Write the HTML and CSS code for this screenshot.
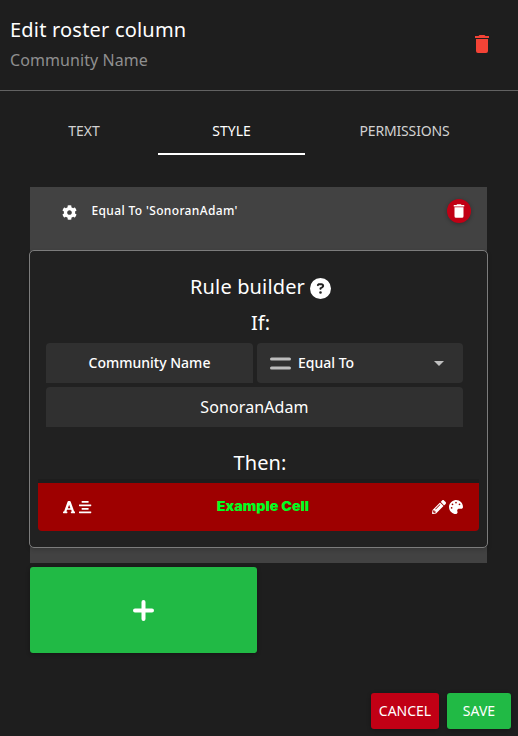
FILE: index.html
```html
<!DOCTYPE html>
<html lang="en">
<head>
<meta charset="utf-8">
<title>Edit roster column</title>
<link rel="stylesheet" href="styles.css">
</head>
<body>
<main class="dialog">
  <header class="header">
    <div>
      <h1 class="title">Edit roster column</h1>
      <p class="subtitle">Community Name</p>
    </div>
    <svg class="header-trash" viewBox="0 0 24 24"><path d="M19,4H15.5L14.5,3H9.5L8.5,4H5V6H19M6,19A2,2 0 0,0 8,21H16A2,2 0 0,0 18,19V7H6V19Z"/></svg>
  </header>
  <nav class="tabs">
    <div class="tab">TEXT</div>
    <div class="tab active">STYLE</div>
    <div class="tab">PERMISSIONS</div>
  </nav>
  <section class="rule">
    <div class="rule-head">
      <svg class="gear" viewBox="0 0 512 512"><path d="M487.4 315.7l-42.6-24.6c4.3-23.2 4.3-47 0-70.2l42.6-24.6c4.9-2.8 7.1-8.6 5.5-14-11.1-35.6-30-67.8-54.7-94.6-3.8-4.1-10-5.1-14.8-2.3L380.8 110c-17.9-15.4-38.5-27.3-60.8-35.1V25.8c0-5.6-3.9-10.5-9.4-11.7-36.7-8.2-74.3-7.8-109.2 0-5.5 1.2-9.4 6.1-9.4 11.7V75c-22.2 7.9-42.8 19.8-60.8 35.1L88.700 85.500c-4.900-2.800-11-1.900-14.800 2.300-24.700 26.700-43.600 58.900-54.700 94.600-1.700 5.400.6 11.200 5.500 14L67.300 221c-4.300 23.200-4.300 47 0 70.200l-42.600 24.600c-4.900 2.800-7.100 8.600-5.500 14 11.100 35.600 30 67.800 54.700 94.600 3.800 4.100 10 5.100 14.800 2.300l42.600-24.600c17.900 15.400 38.500 27.300 60.800 35.100v49.200c0 5.600 3.900 10.500 9.400 11.700 36.700 8.200 74.300 7.800 109.200 0 5.500-1.200 9.400-6.100 9.400-11.700v-49.200c22.200-7.900 42.800-19.800 60.800-35.100l42.600 24.600c4.900 2.800 11 1.900 14.800-2.300 24.700-26.700 43.600-58.900 54.700-94.600 1.500-5.500-.7-11.300-5.600-14.100zM256 336c-44.100 0-80-35.900-80-80s35.900-80 80-80 80 35.900 80 80-35.900 80-80 80z"/></svg>
      <span class="rule-name">Equal To 'SonoranAdam'</span>
      <div class="round-button"><svg viewBox="0 0 24 24"><path d="M19,4H15.5L14.5,3H9.5L8.5,4H5V6H19M6,19A2,2 0 0,0 8,21H16A2,2 0 0,0 18,19V7H6V19Z"/></svg></div>
    </div>
    <div class="builder">
      <h2 class="heading builder-title"><span>Rule builder</span><svg class="help" viewBox="0 0 512 512"><path d="M256 512A256 256 0 1 0 256 0a256 256 0 1 0 0 512zM169.800 165.300c7.900-22.300 29.100-37.300 52.800-37.300h58.300c34.900 0 63.100 28.300 63.100 63.100c0 22.600-12.100 43.500-31.700 54.800L280 264.400c-.2 13-10.900 23.600-24 23.600c-13.300 0-24-10.700-24-24V250.500c0-8.600 4.600-16.500 12.100-20.800l44.300-25.400c4.700-2.700 7.600-7.700 7.600-13.100c0-8.400-6.800-15.100-15.100-15.100H222.600c-3.400 0-6.400 2.100-7.500 5.300l-.4 1.200c-4.400 12.500-18.200 19-30.600 14.600s-19-18.200-14.600-30.600l.4-1.200zM224 352a32 32 0 1 1 64 0 32 32 0 1 1 -64 0z"/></svg></h2>
      <h2 class="heading if">If:</h2>
      <div class="fields">
        <div class="field flat"><span>Community Name</span></div>
        <div class="field select">
          <svg class="equals" viewBox="0 0 21 13"><path d="M1.500 2H19.500M1.500 11H19.500"/></svg>
          <span>Equal To</span>
          <svg class="caret" viewBox="0 0 10 5"><path d="M0 0H10L5 5Z"/></svg>
        </div>
        <div class="field flat value"><span>SonoranAdam</span></div>
      </div>
      <h2 class="heading then">Then:</h2>
      <div class="cell">
        <div class="cell-icons">
          <svg class="font-icon" viewBox="0 0 448 512"><path d="M432 416h-23.410L277.880 53.690A32 32 0 0 0 247.580 32h-47.160a32 32 0 0 0-30.300 21.690L39.410 416H16a16 16 0 0 0-16 16v32a16 16 0 0 0 16 16h128a16 16 0 0 0 16-16v-32a16 16 0 0 0-16-16h-19.580l23.300-64h152.560l23.300 64H304a16 16 0 0 0-16 16v32a16 16 0 0 0 16 16h128a16 16 0 0 0 16-16v-32a16 16 0 0 0-16-16zM176.850 304L224 177l47.150 127z"/></svg>
          <svg class="align-icon" viewBox="0 0 448 512"><path d="M432 160H16a16 16 0 0 0-16 16v32a16 16 0 0 0 16 16h416a16 16 0 0 0 16-16v-32a16 16 0 0 0-16-16zm0 256H16a16 16 0 0 0-16 16v32a16 16 0 0 0 16 16h416a16 16 0 0 0 16-16v-32a16 16 0 0 0-16-16zM108.100 96h231.810A12.090 12.090 0 0 0 352 83.900V44.090A12.090 12.090 0 0 0 339.910 32H108.100A12.090 12.090 0 0 0 96 44.090V83.900A12.100 12.100 0 0 0 108.100 96zm231.810 256A12.090 12.090 0 0 0 352 339.900v-39.810A12.090 12.090 0 0 0 339.910 288H108.100A12.090 12.090 0 0 0 96 300.090v39.810a12.100 12.100 0 0 0 12.100 12.100z"/></svg>
        </div>
        <span class="example">Example Cell</span>
        <div class="cell-icons right">
          <svg class="edit-icon" viewBox="0 0 512 512"><path d="M497.900 142.100l-46.100 46.100c-4.700 4.700-12.300 4.700-17 0l-111-111c-4.700-4.700-4.700-12.300 0-17l46.100-46.100c18.700-18.700 49.100-18.700 67.900 0l60.100 60.100c18.800 18.700 18.800 49.100 0 67.900zM284.200 99.800L21.600 362.400.4 483.900c-2.900 16.400 11.400 30.600 27.800 27.800l121.500-21.300 262.600-262.600c4.700-4.700 4.700-12.300 0-17l-111-111c-4.800-4.700-12.400-4.700-17.100 0zM124.100 339.900c-5.500-5.500-5.500-14.300 0-19.800l154-154c5.500-5.500 14.300-5.500 19.800 0s5.500 14.300 0 19.800l-154 154c-5.500 5.500-14.300 5.500-19.800 0zM88 424h48v36.300l-64.500 11.300-31.100-31.100L51.700 376H88v48z"/></svg>
          <svg class="palette-icon" viewBox="0 0 512 512"><path d="M204.300 5C104.900 24.400 24.800 104.300 5.200 203.400c-37 187 131.700 326.400 258.800 306.700 41.200-6.400 61.400-54.600 42.500-91.700-23.100-45.400 9.900-98.400 60.900-98.400h79.700c35.800 0 64.800-29.600 64.900-65.300C511.500 97.100 368.100-26.900 204.300 5zM96 320c-17.700 0-32-14.300-32-32s14.300-32 32-32 32 14.300 32 32-14.300 32-32 32zm32-128c-17.700 0-32-14.300-32-32s14.300-32 32-32 32 14.300 32 32-14.300 32-32 32zm128-64c-17.700 0-32-14.300-32-32s14.300-32 32-32 32 14.300 32 32-14.300 32-32 32zm128 64c-17.700 0-32-14.300-32-32s14.300-32 32-32 32 14.300 32 32-14.300 32-32 32z"/></svg>
        </div>
      </div>
    </div>
  </section>
  <div class="add"><svg viewBox="0 0 21 21"><path d="M10.500 2V19M2 10.500H19"/></svg></div>
  <footer class="actions">
    <div class="button cancel">CANCEL</div>
    <div class="button save">SAVE</div>
  </footer>
</main>
</body>
</html>
```
FILE: styles.css
```css
* { box-sizing: border-box; }
body {
  margin: 0;
  background: #1e1e1e;
  color: #fff;
  font-family: "Noto Sans", "Open Sans", sans-serif;
}
svg { display: block; fill: currentColor; flex: none; }
span { white-space: nowrap; }
h1, h2, p { margin: 0; font-weight: 400; }

.dialog { display: flex; flex-direction: column; height: 736px; overflow: hidden; }
.header {
  display: flex;
  justify-content: space-between;
  height: 91px;
  padding: 14px 24px 0 10px;
  border-bottom: 1px solid #626262;
}
.title { font-size: 20px; line-height: 32px; letter-spacing: .2px; }
.subtitle { font-size: 16px; line-height: 28px; letter-spacing: .08px; color: #8f8f8f; }
.header-trash { width: 24px; height: 24px; margin-top: 18px; color: #f44336; }

.tabs { display: flex; margin: 16px 14px 0 10px; height: 48px; }
.tab {
  width: 148px;
  text-align: center;
  font-size: 14px;
  line-height: 48px;
  color: #d2d2d2;
}
.tab.active { width: 147px; color: #fff; border-bottom: 2px solid #fff; }
.tab:last-child { flex: 1; letter-spacing: -.15px; }

.rule { margin: 32px 31px 0 30px; padding-bottom: 15px; background: #424242; }
.rule-head { display: flex; height: 63px; padding: 12px 16px 0 31.500px; }
.gear { width: 15px; height: 15px; margin-top: 6px; }
.rule-name { margin-left: 15px; font-size: 12px; line-height: 24px; font-weight: 500; letter-spacing: .36px; }
.round-button {
  display: flex;
  align-items: center;
  justify-content: center;
  width: 24px;
  height: 24px;
  margin-left: auto;
  border-radius: 50%;
  background: #c10015;
  box-shadow: 0 1px 4px rgba(0, 0, 0, .3);
}
.round-button svg { width: 18px; height: 18px; }

.builder {
  height: 298px;
  margin: 0 -1px;
  padding: 20px 8px 0;
  background: #212121;
  border: 1px solid #7c7c7c;
  border-radius: 5px;
  box-shadow: 0 2px 4px rgba(0, 0, 0, .18);
}
.heading { font-size: 20px; line-height: 32px; text-align: center; }
.builder-title { display: flex; justify-content: center; align-items: center; gap: 5px; padding-left: 4px; letter-spacing: .15px; }
.help { width: 21px; height: 21px; margin-top: 3px; }
.if { line-height: 40px; padding-left: 4px; }
.fields { display: grid; grid-template-columns: 207px 206px; gap: 4px; margin: 0 8px; }
.field {
  display: flex;
  align-items: center;
  justify-content: center;
  height: 40px;
  border-radius: 4px;
  background: #303030;
  font-size: 14px;
  font-weight: 500;
}
.field:not(.value) span { padding-bottom: 2px; }
.flat { border-radius: 4px 4px 0 0; }
.select { justify-content: flex-start; padding: 0 19px 0 13px; }
.equals { width: 21px; height: 13px; margin-right: 7px; fill: none; stroke: #bdbdbd; stroke-width: 3; stroke-linecap: round; }
.caret { width: 10px; height: 5px; margin-left: auto; color: #c0c0c0; }
.value { grid-column: 1 / 3; font-size: 16px; font-weight: 400; letter-spacing: .1px; }
.then { margin-top: 20px; padding-left: 3px; letter-spacing: .15px; }
.cell {
  display: grid;
  grid-template-columns: 1fr auto 1fr;
  align-items: center;
  height: 52px;
  padding: 0 16px 0 24.500px;
  border-top: 4px solid #1d1d1d;
  border-radius: 0 0 4px 4px;
  background: #9e0000;
}
.cell-icons { display: flex; align-items: center; }
.right { justify-content: flex-end; gap: 3px; }
.font-icon { width: 12.250px; height: 14px; }
.align-icon { width: 12.250px; height: 14px; margin-left: 4.500px; }
.edit-icon, .palette-icon { width: 14px; height: 14px; }
.example {
  padding-bottom: 2px;
  font: 900 13px "Inter", sans-serif;
  color: #0f2;
  transform: scaleX(1.1);
}

.add {
  display: flex;
  align-items: center;
  justify-content: center;
  width: 227px;
  height: 86px;
  margin: 4px 0 0 30px;
  border-radius: 3px;
  background: #21ba45;
  box-shadow: 0 1px 4px rgba(0, 0, 0, .3);
}
.add svg { width: 21px; height: 21px; fill: none; stroke: #fff; stroke-width: 4; stroke-linecap: round; }

.actions { display: flex; justify-content: flex-end; gap: 8px; margin: 40px 7px 0 0; }
.button {
  display: flex;
  align-items: center;
  justify-content: center;
  width: 68px;
  height: 36px;
  padding-bottom: 2px;
  border-radius: 3px;
  font-size: 14px;
  box-shadow: 0 1px 4px rgba(0, 0, 0, .3);
}
.cancel { background: #c10015; }
.save { width: 64px; background: #21ba45; }
```
